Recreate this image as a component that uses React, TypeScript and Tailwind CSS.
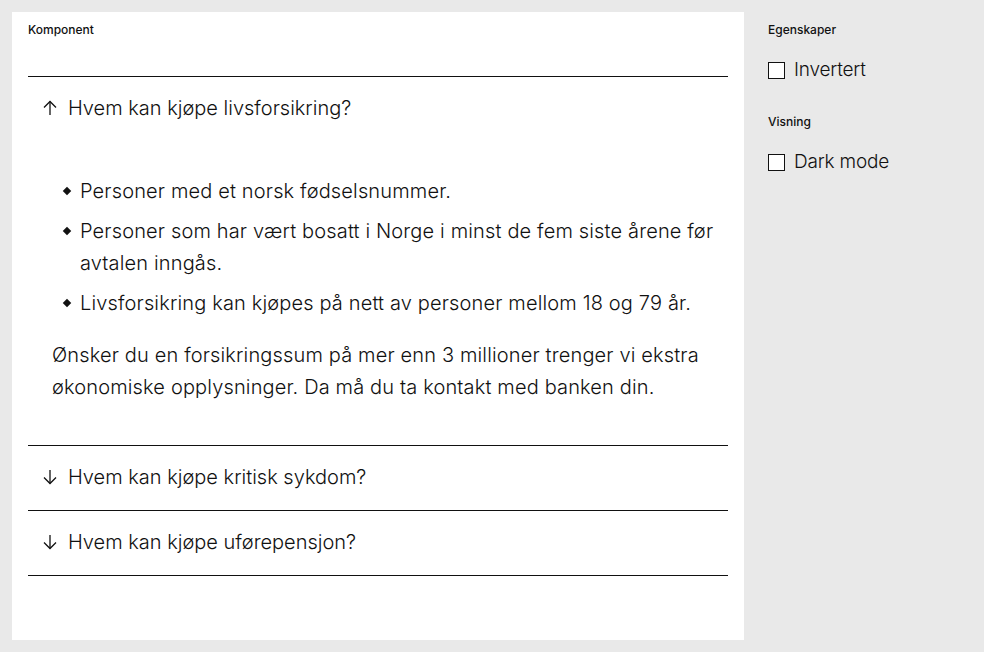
import { useState } from 'react';

const font = { fontFamily: 'Inter, "Noto Sans", sans-serif' };

function Arrow({ up }: { up: boolean }) {
  return (
    <svg width="16" height="16" viewBox="0 0 16 16" fill="none" stroke="currentColor" strokeWidth="1.3" className="shrink-0">
      {up ? (
        <>
          <path d="M8 15V1.5" />
          <path d="M2 7.5L8 1.5L14 7.5" />
        </>
      ) : (
        <>
          <path d="M8 1V14.5" />
          <path d="M2 8.5L8 14.5L14 8.5" />
        </>
      )}
    </svg>
  );
}

const items = [
  { title: 'Hvem kan kjøpe livsforsikring?' },
  { title: 'Hvem kan kjøpe kritisk sykdom?' },
  { title: 'Hvem kan kjøpe uførepensjon?' },
];

function Checkbox({ label }: { label: string }) {
  const [checked, setChecked] = useState(false);
  return (
    <label className="flex items-center gap-[9px] cursor-pointer h-8">
      <span
        onClick={() => setChecked(!checked)}
        className={`w-[17px] h-[17px] border border-[#111] ${checked ? 'bg-[#111]' : 'bg-white'}`}
      />
      <span className="text-[19px] font-light leading-[32px] text-[#111] tracking-[-0.2px]">{label}</span>
    </label>
  );
}

export default function App() {
  const [open, setOpen] = useState(0);

  return (
    <div className="w-[984px] h-[652px] bg-[#e9e9e9] flex p-3 gap-6 text-[#111]" style={font}>
      <div className="bg-white w-[732px] h-[628px] px-4 pt-[10px]">
        <div className="text-[12px] font-medium leading-4 h-[54px]">Komponent</div>
        <div className="border-t border-[#111]">
          {items.map((item, i) => (
            <div key={i} className="border-b border-[#111]">
              <button
                onClick={() => setOpen(open === i ? -1 : i)}
                className="w-full h-[64px] flex items-center gap-[10px] pl-[14px] pb-[3px] text-left"
              >
                <Arrow up={open === i} />
                <span className="text-[20px] font-light">{item.title}</span>
              </button>
              {open === i && (
                <div className="pl-6 pr-1 pt-[34px] pb-[42px] text-[20px] font-light leading-[32px] tracking-[0.15px]">
                  <ul className="flex flex-col gap-2 pl-7">
                    {[
                      'Personer med et norsk fødselsnummer.',
                      'Personer som har vært bosatt i Norge i minst de fem siste årene før avtalen inngås.',
                      'Livsforsikring kan kjøpes på nett av personer mellom 18 og 79 år.',
                    ].map((t) => (
                      <li key={t} className="relative">
                        <span className="absolute -left-[16px] top-[13px] w-[6px] h-[6px] bg-[#111] rotate-45" />
                        {t}
                      </li>
                    ))}
                  </ul>
                  <p className="mt-5 pr-5">
                    Ønsker du en forsikringssum på mer enn 3 millioner trenger vi ekstra økonomiske opplysninger. Da må du ta kontakt med banken din.
                  </p>
                </div>
              )}
            </div>
          ))}
        </div>
      </div>
      <div className="pt-[10px] flex flex-col">
        <div className="text-[12px] font-medium leading-4">Egenskaper</div>
        <div className="mt-4">
          <Checkbox label="Invertert" />
        </div>
        <div className="text-[12px] font-medium leading-4 mt-7">Visning</div>
        <div className="mt-4">
          <Checkbox label="Dark mode" />
        </div>
      </div>
    </div>
  );
}
